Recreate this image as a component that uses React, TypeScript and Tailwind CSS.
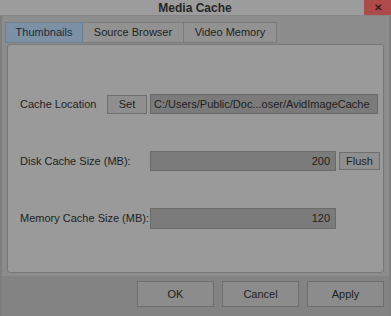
export default function App() {
  const font = { fontFamily: '"Liberation Sans", Arial, sans-serif' };
  return (
    <div
      className="w-[391px] h-[316px] bg-[#8c8c8c] flex flex-col text-[11px] text-[#1e1e1e] overflow-hidden"
      style={font}
    >
      {/* title bar */}
      <div className="h-[16px] flex bg-[#9c9c9c] border-b border-[#858585]">
        <div className="flex-1 flex items-center justify-center font-bold text-[12px] text-[#262626] pl-[26px]">
          Media Cache
        </div>
        <div className="w-[27px] bg-[#ad4a4a] flex items-center justify-center text-[#3a1a1a] font-bold text-[10px]">
          ✕
        </div>
      </div>

      <div className="flex-1 flex flex-col pl-[3px] pr-[5px] border-x-[2px] border-[#7e7e7e]">
        {/* tabs */}
        <div className="flex mt-[6px] h-[21px]">
          <div className="w-[78px] bg-[#7d91a6] border border-[#6d7f92] flex items-center justify-center text-[#1f2a36]">
            Thumbnails
          </div>
          <div className="w-[101px] bg-[#929292] border border-[#7a7a7a] border-l-0 flex items-center justify-center">
            Source Browser
          </div>
          <div className="w-[93px] bg-[#929292] border border-[#7a7a7a] border-l-0 flex items-center justify-center">
            Video Memory
          </div>
        </div>

        {/* panel */}
        <div className="h-[229px] ml-[2px] bg-[#9a9a9a] border border-[#777] rounded-[3px] mt-[1px] flex flex-col pl-[12px] pr-[4px]">
          <div className="flex items-center mt-[49px] h-[20px]">
            <div className="w-[87px] shrink-0 whitespace-nowrap">Cache Location</div>
            <div className="w-[40px] shrink-0 h-[19px] bg-[#8f8f8f] border border-[#6e6e6e] flex items-center justify-center">
              Set
            </div>
            <div className="ml-[3px] w-[228px] shrink-0 h-[20px] bg-[#7b7b7b] border border-[#6a6a6a] flex items-center px-[3px] whitespace-nowrap overflow-hidden">
              C:/Users/Public/Doc...oser/AvidImageCache
            </div>
          </div>

          <div className="flex items-center mt-[37px] h-[20px]">
            <div className="w-[130px] shrink-0 whitespace-nowrap">Disk Cache Size (MB):</div>
            <div className="w-[186px] shrink-0 h-[20px] bg-[#7b7b7b] border border-[#6a6a6a] flex items-center justify-end px-[5px]">
              200
            </div>
            <div className="ml-[3px] w-[41px] shrink-0 h-[18px] bg-[#8f8f8f] border border-[#6e6e6e] flex items-center justify-center">
              Flush
            </div>
          </div>

          <div className="flex items-center mt-[37px] h-[21px]">
            <div className="w-[130px] shrink-0 whitespace-nowrap">Memory Cache Size (MB):</div>
            <div className="w-[186px] shrink-0 h-[21px] bg-[#7b7b7b] border border-[#6a6a6a] flex items-center justify-end px-[5px]">
              120
            </div>
          </div>
        </div>

        {/* bottom strip */}
        <div className="flex-1 bg-[#838383] mt-[3px] -ml-[3px] -mr-[5px] flex justify-end items-start pt-[5px] pr-[5px] gap-[8px]">
          <div className="w-[77px] h-[26px] bg-[#8c8c8c] border border-[#6e6e6e] flex items-center justify-center">
            OK
          </div>
          <div className="w-[77px] h-[26px] bg-[#8c8c8c] border border-[#6e6e6e] flex items-center justify-center">
            Cancel
          </div>
          <div className="w-[77px] h-[26px] bg-[#8c8c8c] border border-[#6e6e6e] flex items-center justify-center">
            Apply
          </div>
        </div>
      </div>
    </div>
  );
}
